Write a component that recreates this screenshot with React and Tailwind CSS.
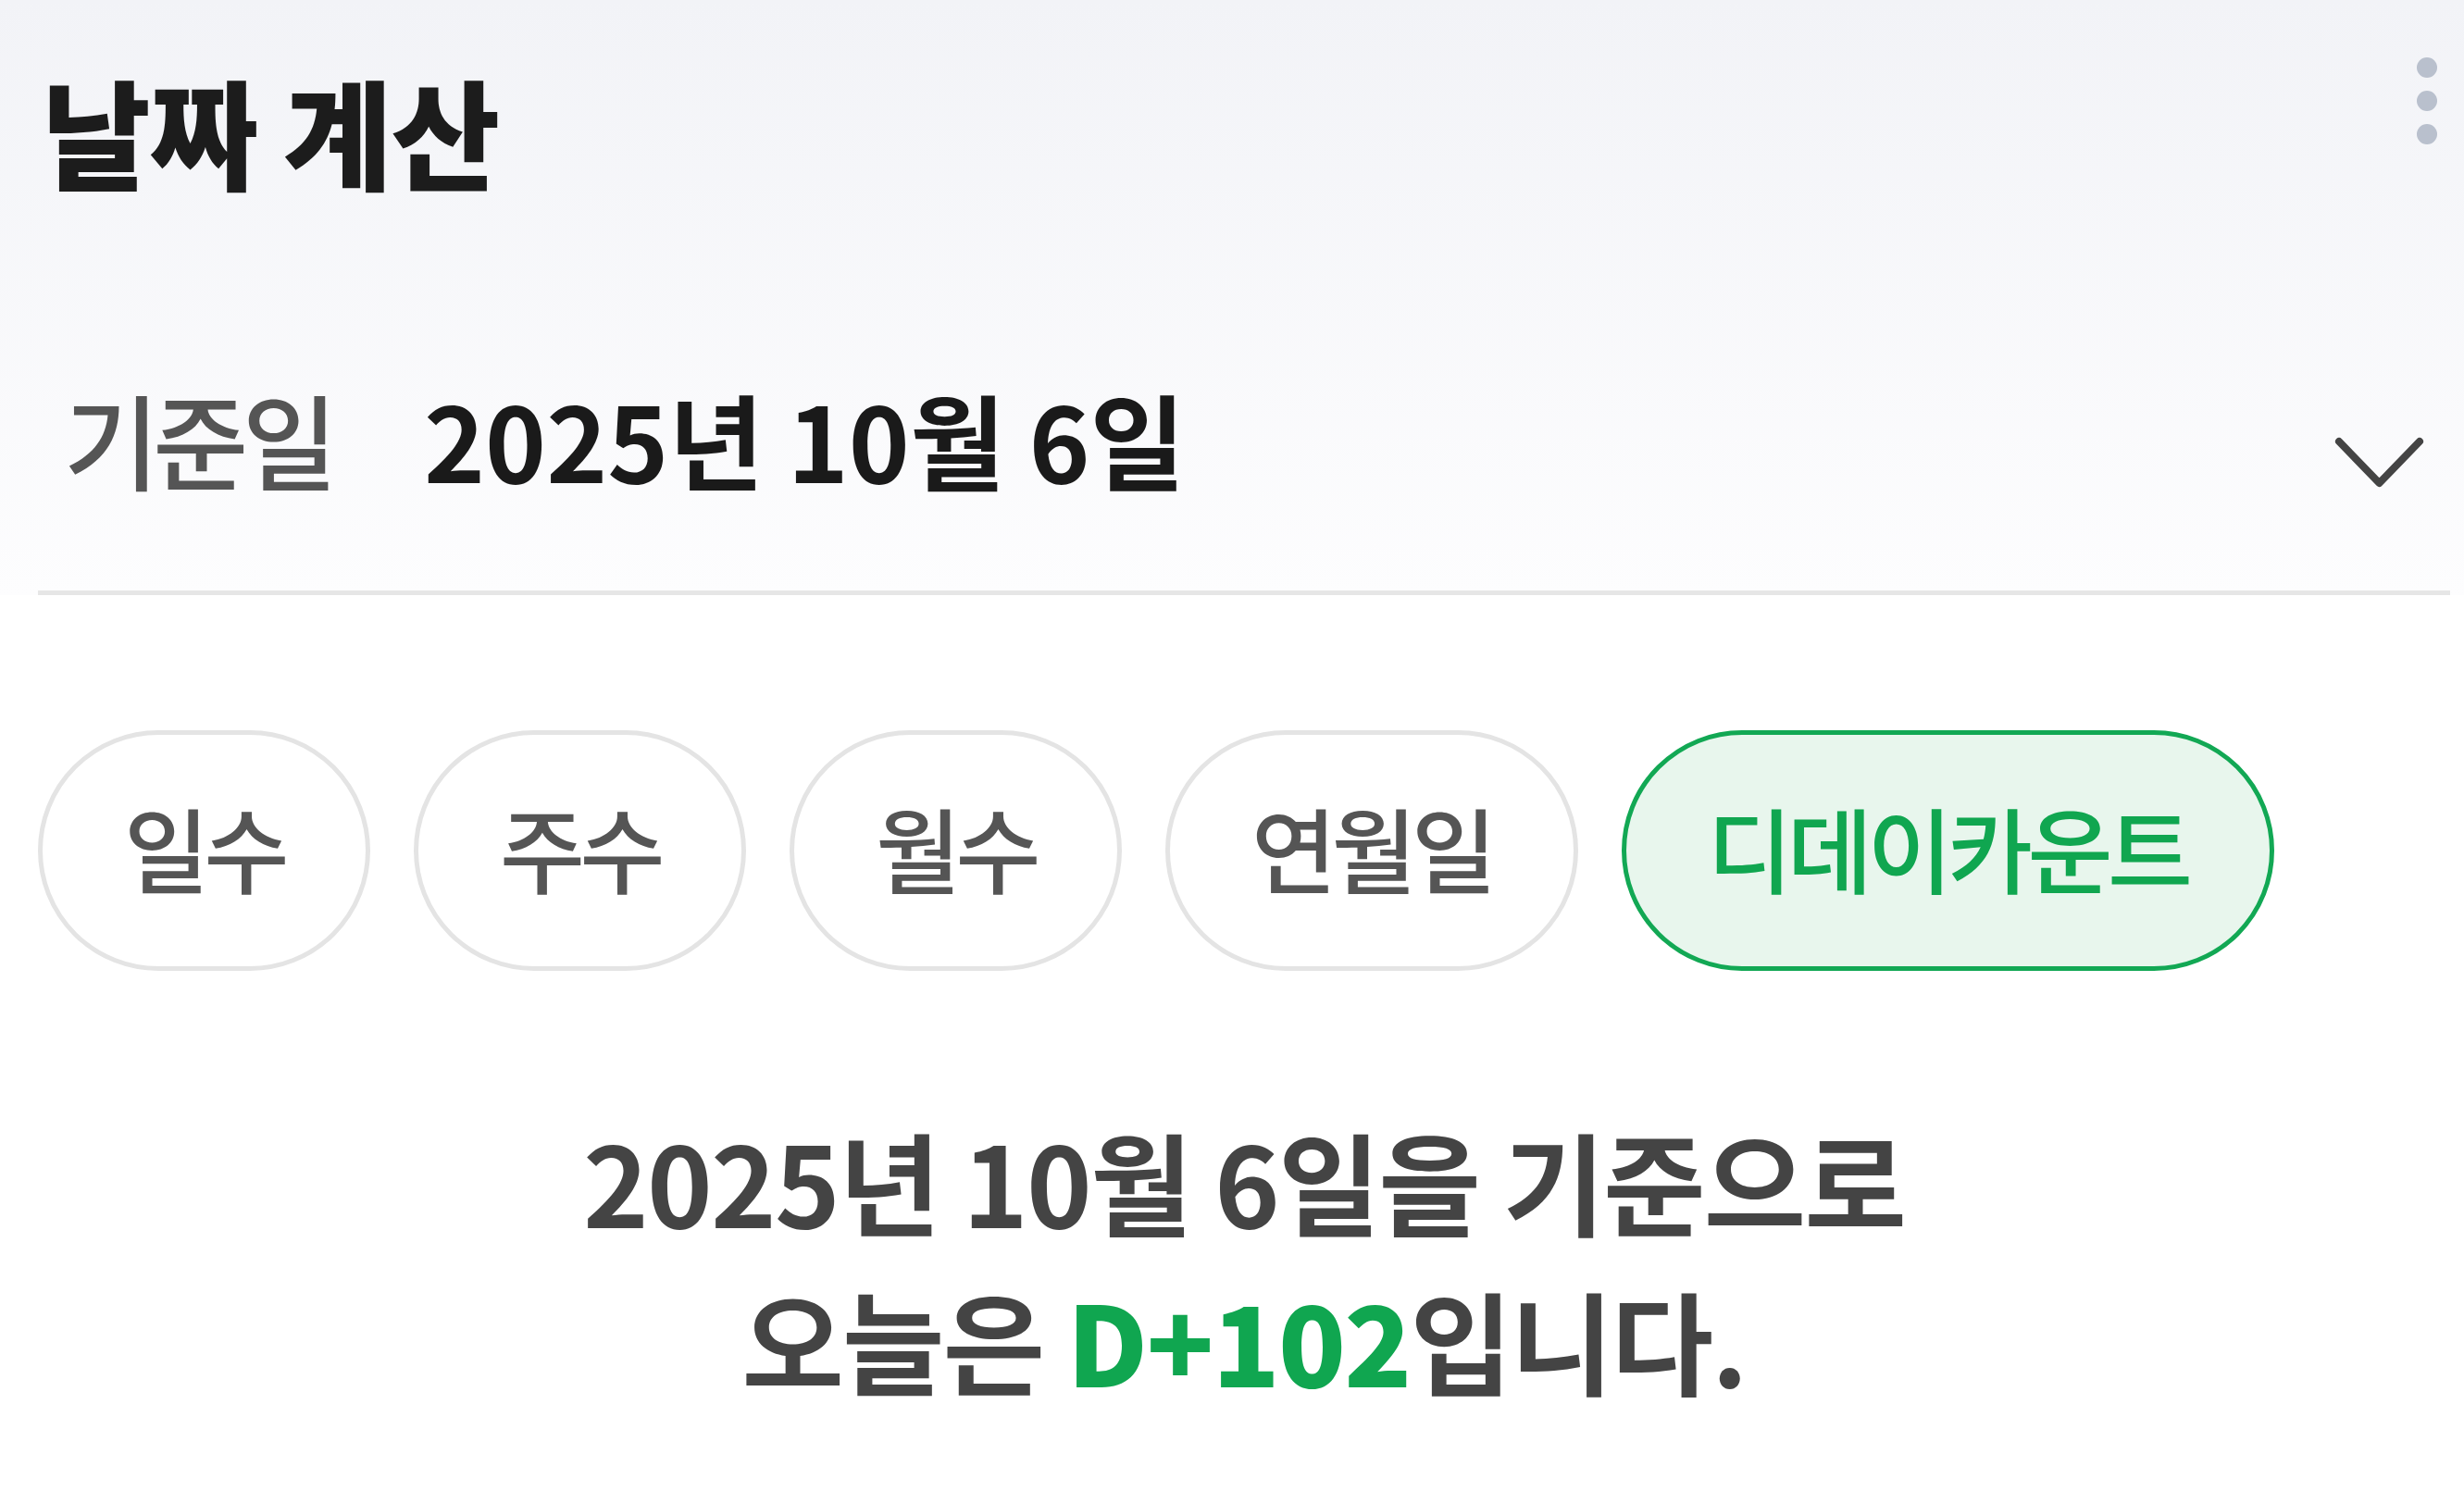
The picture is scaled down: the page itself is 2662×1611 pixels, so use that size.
import React from "react";

const tabs = ["일수", "주수", "월수", "연월일", "디데이카운트"];

const ChevronDown = () => (
  <svg width="97" height="56" viewBox="0 0 97 56" fill="none">
    <polyline
      points="5,5 48.5,50 92,5"
      stroke="#444444"
      strokeWidth="8"
      strokeLinecap="round"
      strokeLinejoin="round"
    />
  </svg>
);

export default function App() {
  const active = "디데이카운트";

  return (
    <div className="min-h-screen w-full bg-white font-['Noto_Sans_CJK_KR','Noto_Sans',sans-serif]">
      {/* Header */}
      <div className="bg-linear-to-b from-[#f2f3f7] to-[#fdfdfe] pl-[41px] pr-[15px]">
        <div className="flex items-start justify-between pt-[77px]">
          <h1 className="ml-[4px] text-[128px] leading-none font-black tracking-[-0.01em] text-[#1c1c1c]">
            날짜 계산
          </h1>
          <div className="-mt-[15px] mr-[14px] flex flex-col gap-[14px]">
            <span className="h-[22px] w-[22px] rounded-full bg-[#b9c0cd]" />
            <span className="h-[22px] w-[22px] rounded-full bg-[#b9c0cd]" />
            <span className="h-[22px] w-[22px] rounded-full bg-[#b9c0cd]" />
          </div>
        </div>

        {/* Base date row */}
        <div className="mt-[212px] flex items-start justify-between">
          <div className="flex items-start gap-[100px] pl-[28px]">
            <span className="text-[112px] leading-none font-medium tracking-[-0.06em] text-[#555555]">
              기준일
            </span>
            <span className="text-[112px] leading-none font-bold tracking-[0em] text-[#1a1a1a]">
              2025년 10월 6일
            </span>
          </div>
          <div className="mt-[55px] mr-[28px]">
            <ChevronDown />
          </div>
        </div>
        <div className="mt-[109px] h-[5px] bg-[#e6e6e6]" />
      </div>

      {/* Tabs */}
      <div className="pl-[41px] pr-[15px]">
        <div className="mt-[146px] flex gap-[47px]">
          {tabs.map((t) => (
            <button
              key={t}
              className={
                t === active
                  ? "flex h-[260px] items-center justify-center rounded-full border-[5px] border-[#12a854] bg-[#e8f6ed] px-[88px] pb-[8px] text-[100px] leading-none font-medium tracking-[-0.055em] text-[#10a650]"
                  : "flex h-[260px] items-center justify-center rounded-full border-[5px] border-[#e4e4e4] bg-white px-[88px] pb-[8px] text-[100px] leading-none font-medium tracking-[-0.055em] text-[#555555]"
              }
            >
              {t}
            </button>
          ))}
        </div>

        {/* Result */}
        <div className="mt-[140px] text-center text-[120px] leading-[172px] font-semibold tracking-[-0.015em] text-[#444444]">
          <p>2025년 10월 6일을 기준으로</p>
          <p>
            오늘은 <span className="font-black text-[#10a650]">D+102</span>입니다.
          </p>
        </div>
      </div>
    </div>
  );
}
